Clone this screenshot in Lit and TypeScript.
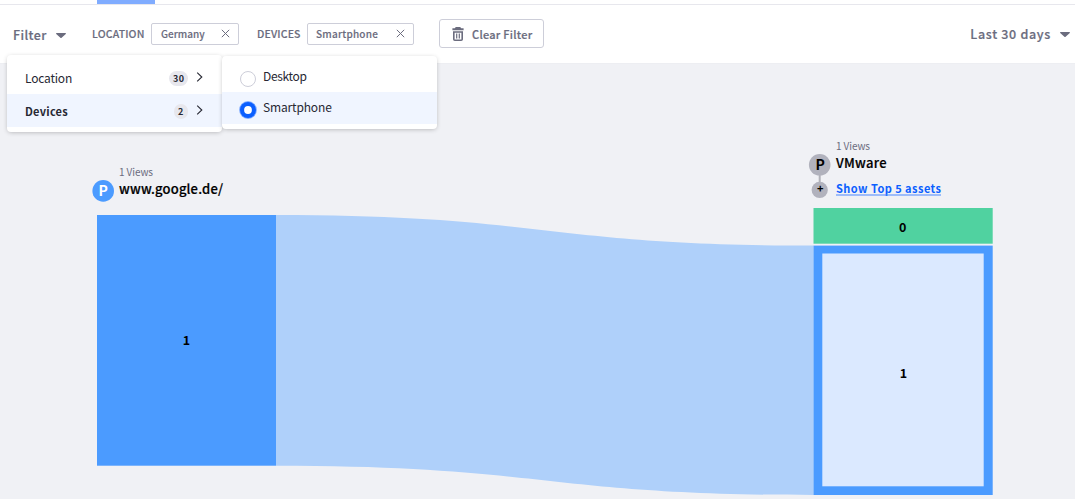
import { LitElement, html, svg, css } from "lit";
import { customElement, property } from "lit/decorators.js";

const caret = html`<svg width="10" height="5" viewBox="0 0 10 5"><path d="M.7 0h8.6c.6 0 .9.6.5 1L5.6 4.7a.9.9 0 0 1-1.2 0L.2 1C-.2.6.1 0 .7 0z" fill="#6b6c7e"/></svg>`;
const chevron = html`<svg class="chev" width="7" height="10" viewBox="0 0 7 10"><path d="M1.2.7 5.8 5 1.2 9.3" fill="none" stroke="#272833" stroke-width="1.1"/></svg>`;

@customElement("filter-chip")
class FilterChip extends LitElement {
  @property() label = "";
  static styles = css`
    :host { display: flex; align-items: center; justify-content: space-between; box-sizing: border-box; height: 22px; border: 1px solid #cdced9; border-radius: 2px; padding: 0 8.5px 0 9px; font-size: 10px; font-weight: 500; letter-spacing: 0; line-height: 20px; color: #6b6c7e; background: #fff; -webkit-text-stroke: .15px #6b6c7e; }
    :host([label="Smartphone"]) { padding-left: 8px; letter-spacing: .22px; }
    svg { display: block; }
  `;
  render() {
    return html`<span>${this.label}</span><svg width="9" height="9" viewBox="0 0 9 9"><path d="M.8.8l7.4 7.4M8.2.8.8 8.2" stroke="#6b6c7e" stroke-width="1" fill="none"/></svg>`;
  }
}

@customElement("path-chart")
class PathChart extends LitElement {
  static styles = css`
    :host { display: block; }
    svg { display: block; }
    text { font-family: "Noto Sans CJK JP", "Noto Sans", sans-serif; }
    .views { font-size: 10px; fill: #6b6c7e; }
    .name { font-size: 13px; font-weight: 500; fill: #000; stroke: #000; stroke-width: .2; }
    .count { font-size: 12.5px; font-weight: 700; text-anchor: middle; }
    .badge { font-size: 14px; font-weight: 700; text-anchor: middle; }
    .plus { font-size: 11px; font-weight: 700; text-anchor: middle; }
    .link { font-size: 11px; font-weight: 700; fill: #0b5fff; }
  `;
  render() {
    return html`<svg width="1075" height="435" viewBox="0 64 1075 435">${svg`
      <path d="M276 215C544.5 215 544.5 245.6 813.5 245.6V495C544.5 495 544.5 465.7 276 465.7z" fill="#afd0fa"/>
      <rect x="97" y="215" width="179" height="250.7" fill="#4b9bff"/>
      <text class="count" x="186.5" y="345">1</text>
      <text class="views" x="119" y="176" textLength="34">1 Views</text>
      <circle cx="103.2" cy="190.9" r="10.8" fill="#4b9bff"/>
      <text class="badge" x="103.2" y="196" fill="#fff">P</text>
      <text class="name" x="119" y="194" textLength="104">www.google.de/</text>

      <text class="views" x="836" y="150" textLength="34">1 Views</text>
      <path d="M819.7 170v14" stroke="#b1b2b9" stroke-width="2"/>
      <circle cx="819.7" cy="164.8" r="10.8" fill="#b1b2bd"/>
      <circle cx="819.7" cy="189.9" r="8.1" fill="#b1b2bd"/>
      <text class="badge" x="820.2" y="170">P</text>
      <text class="plus" x="820.2" y="193.4">+</text>
      <text class="name" x="836" y="168" textLength="50.5">VMware</text>
      <text class="link" x="836" y="193" textLength="105">Show Top 5 assets</text>
      <path d="M836 195h105" stroke="#4b87ff" stroke-width="1.2"/>
      <rect x="813.5" y="208" width="179.2" height="35.7" fill="#50d2a0"/>
      <text class="count" x="902.7" y="232">0</text>
      <rect x="813.5" y="245.6" width="179.2" height="249.4" fill="#4b9bff"/>
      <rect x="822.3" y="253.5" width="161.4" height="232.8" fill="#dbe9ff"/>
      <text class="count" x="903.5" y="378">1</text>
    `}</svg>`;
  }
}

@customElement("app-root")
class AppRoot extends LitElement {
  static styles = css`
    :host { display: block; position: relative; width: 1075px; height: 499px; overflow: hidden; background: #f0f1f5; font-family: "Noto Sans CJK JP", "Noto Sans", sans-serif; color: #272833; }
    svg { display: block; flex: none; }
    .tabs { height: 4px; background: #fff; border-bottom: 1px solid #e7e7ed; padding-left: 97px; }
    .tab { width: 58px; height: 4px; background: #80acff; }
    .bar { display: flex; align-items: center; box-sizing: border-box; height: 59px; background: #fff; border-bottom: 1px solid #edeef2; padding: 0 5px 1px 13px; color: #6b6c7e; white-space: nowrap; }
    .drop { display: flex; align-items: center; font-size: 12.5px; font-weight: 500; letter-spacing: .4px; line-height: 20px; gap: 9px; -webkit-text-stroke: .2px #6b6c7e; }
    .first { width: 79px; padding-top: 3px; }
    .last { margin-left: auto; padding-top: 1px; letter-spacing: .68px; }
    .cat { font-size: 10.5px; font-weight: 500; letter-spacing: .15px; line-height: 20px; -webkit-text-stroke: .15px #6b6c7e; }
    .loc { width: 59px; }
    .dev { width: 50px; margin-left: 18px; }
    .germany { width: 88px; }
    .phone { width: 107px; }
    .clear { display: flex; align-items: center; box-sizing: border-box; width: 105px; height: 29px; margin-left: 25px; padding-left: 12px; gap: 8px; border: 1px solid #cdced9; border-radius: 3px; font-size: 11px; font-weight: 500; letter-spacing: .27px; -webkit-text-stroke: .2px #6b6c7e; }
    .menu { position: absolute; box-sizing: border-box; width: 215px; background: #fff; border-radius: 4px; box-shadow: 0 1px 5px -1px rgba(0,0,0,.3); font-size: 12px; }
    .main { left: 7px; top: 55px; height: 77px; padding-top: 6px; }
    .sub { left: 222px; top: 56px; height: 73px; padding-top: 5px; }
    .row { display: flex; align-items: center; height: 33px; box-sizing: border-box; padding: 0 19px 0 18px; line-height: 20px; letter-spacing: -.2px; }
    .row.on { background: #f0f5ff; }
    .main .on { font-weight: 700; font-size: 11px; letter-spacing: .25px; }
    .row svg { margin-bottom: 2px; }
    .pill { margin-left: auto; margin-right: 8px; min-width: 14px; box-sizing: border-box; height: 15px; line-height: 15px; margin-top: 2px; padding: 0 3.5px; border-radius: 8px; background: #e7e7ed; font-size: 9px; font-weight: 700; text-align: center; letter-spacing: .5px; }
    .opt { display: flex; align-items: center; height: 31px; padding-left: 17px; gap: 6px; line-height: 20px; font-size: 12px; letter-spacing: -.35px; }
    .opt span { padding-bottom: 1px; }
    .opt.on { height: 32px; background: #f0f5ff; letter-spacing: -.15px; }
    .opt.on span { padding-bottom: 2px; }
    .opt svg { margin-top: 4px; }
  `;
  render() {
    return html`
      <div class="tabs"><div class="tab"></div></div>
      <div class="bar">
        <div class="drop first">Filter ${caret}</div>
        <span class="cat loc">LOCATION</span>
        <filter-chip class="germany" label="Germany"></filter-chip>
        <span class="cat dev">DEVICES</span>
        <filter-chip class="phone" label="Smartphone"></filter-chip>
        <div class="clear">
          <svg width="12" height="14" viewBox="0 0 12 14"><path d="M.4 3.2V1.2h2.4L3.8.1h4.4l1 1.1h2.4v2z" fill="#6b6c7e"/><path d="M1.8 5h8.4v7.2a1 1 0 0 1-1 1H2.8a1 1 0 0 1-1-1z" fill="none" stroke="#6b6c7e" stroke-width="1.6"/><path d="M4.7 6.4v5M7.3 6.4v5" stroke="#6b6c7e" stroke-width="1.2"/></svg>
          <span>Clear Filter</span>
        </div>
        <div class="drop last">Last 30 days ${caret}</div>
      </div>
      <path-chart></path-chart>
      <div class="menu main">
        <div class="row"><span>Location</span><span class="pill">30</span>${chevron}</div>
        <div class="row on"><span>Devices</span><span class="pill">2</span>${chevron}</div>
      </div>
      <div class="menu sub">
        <div class="opt"><svg width="18" height="18" viewBox="0 0 18 18"><circle cx="9" cy="9" r="7.5" fill="#fff" stroke="#cdced9"/></svg><span>Desktop</span></div>
        <div class="opt on"><svg width="18" height="18" viewBox="0 0 18 18"><circle cx="9" cy="9" r="8.9" fill="#80acff"/><circle cx="9" cy="9" r="8" fill="#0b5fff"/><circle cx="9" cy="9" r="3.9" fill="#fff"/></svg><span>Smartphone</span></div>
      </div>`;
  }
}
